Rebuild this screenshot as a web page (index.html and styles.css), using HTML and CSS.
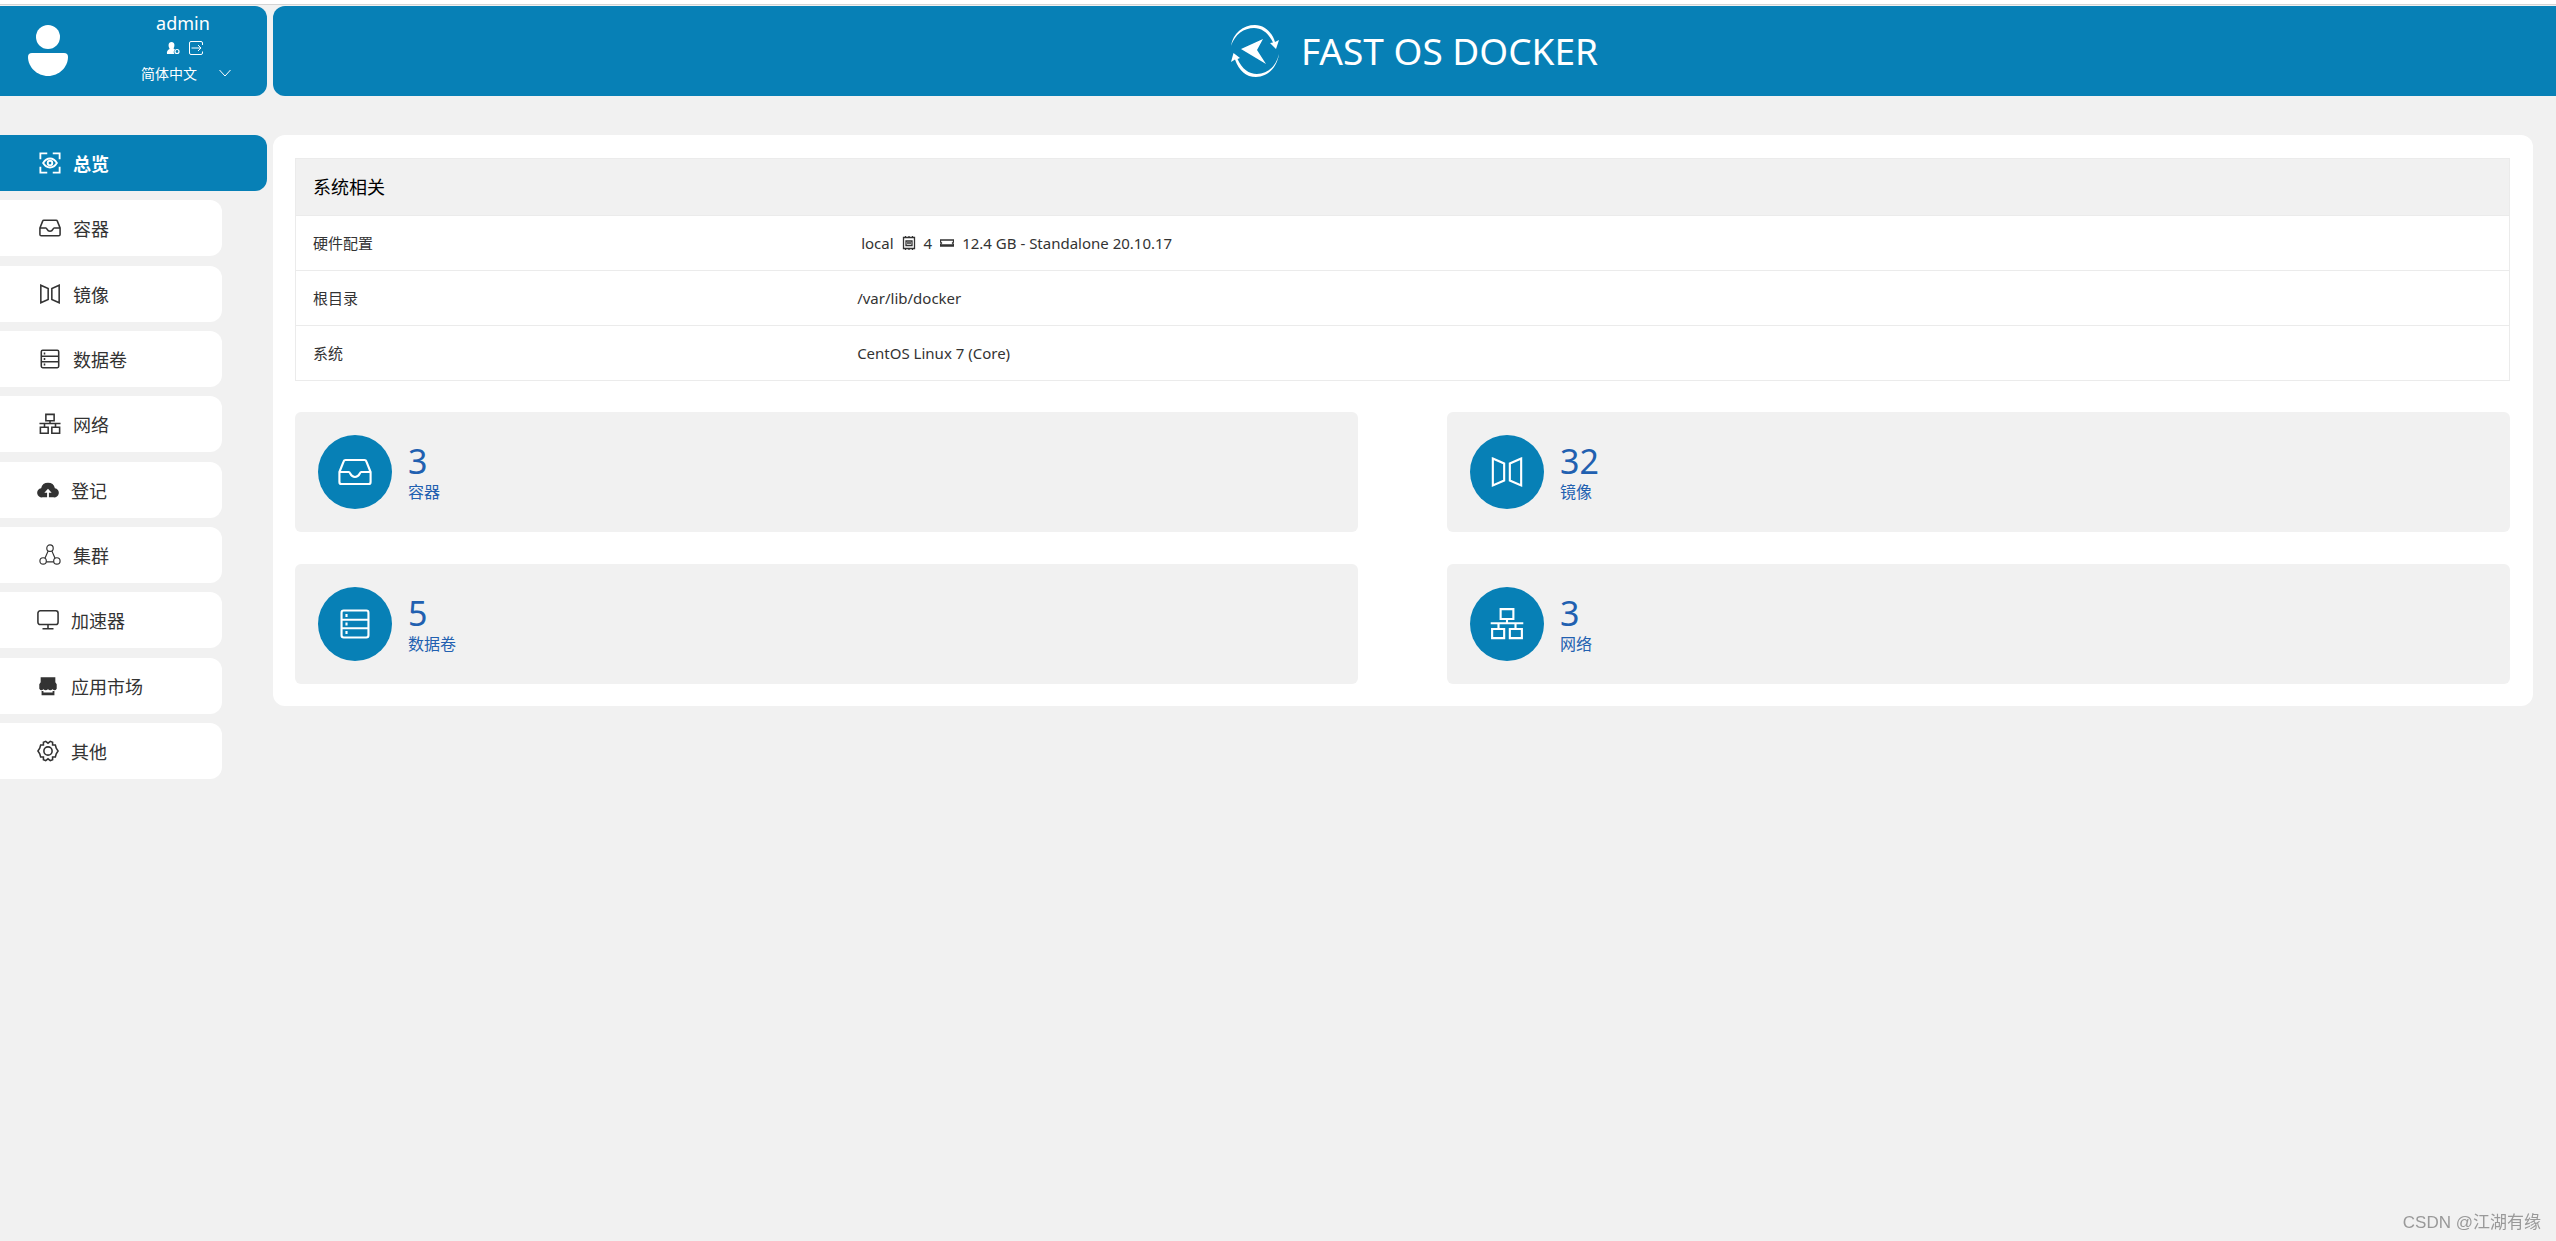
FILE: index.html
```html
<!DOCTYPE html>
<html lang="zh-CN">
<head>
<meta charset="utf-8">
<meta name="viewport" content="width=device-width, initial-scale=1">
<title>FAST OS DOCKER</title>
<link rel="stylesheet" href="styles.css">
</head>
<body>
<svg class="sprite" aria-hidden="true">
  <symbol id="i-view" viewBox="0 0 24 24"><path d="M1.500 8V1.500H9M15 1.500h7.500V8M22.500 16v6.500H15M9 22.500H1.500V16" /><path d="M4.500 12c4-6.500 11-6.500 15 0-4 6.500-11 6.500-15 0z"/><circle cx="12" cy="12" r="2.500"/></symbol>
  <symbol id="i-box" viewBox="0 0 24 24"><path d="M1 12 4 4.500Q4.300 3.500 5.300 3.500H18.700Q19.700 3.500 20 4.500L23 12V19Q23 20.500 21.500 20.500H2.500Q1 20.500 1 19zM1 12H7.500C9 12 8.500 15.500 12 15.500S15 12 16.500 12H23"/></symbol>
  <symbol id="i-mirror" viewBox="0 0 24 24"><path d="M2 2.500 10 6V18L2 21.500zM22 2.500 14 6V18L22 21.500z"/></symbol>
  <symbol id="i-disk" viewBox="0 0 24 24"><rect x="2.500" y="2.500" width="19" height="19" rx="1.500"/><path d="M2.500 9H21.500M2.500 15H21.500M6 5v2M6 11v2M6 17v2"/></symbol>
  <symbol id="i-net" viewBox="0 0 24 24"><path d="M7.500 1.500h9v7h-9zM1.500 15.500h8.500v6.500H1.500zM14 15.500h8.500v6.500H14zM12 8.500v3M.5 11.500h23M6 11.500v4M18 11.500v4"/></symbol>
  <symbol id="i-cloud" viewBox="0 0 24 24"><path d="M6 20A5 5 0 0 1 4.500 10 7.700 7.700 0 0 1 19.500 10 5 5 0 0 1 18 20H13V15H16L12 10.500 8 15H11V20z" fill="currentColor" stroke="none"/></symbol>
  <symbol id="i-cluster" viewBox="0 0 24 24"><circle cx="12" cy="4.500" r="3.500"/><circle cx="4.500" cy="18.500" r="3.500"/><circle cx="19.500" cy="18.500" r="3.500"/><path d="M10 7.500 6.500 15.500M14 7.500 17.500 15.500M8 19.500H16"/></symbol>
  <symbol id="i-screen" viewBox="0 0 24 24"><rect x="1" y="2" width="22" height="15" rx="2.500"/><path d="M12 17v4M6 21.500h12"/></symbol>
  <symbol id="i-shop" viewBox="0 0 24 24"><path d="M4 2.500H20V8L21.500 10V15Q19.500 18 17 15.500 14.500 18 12 15.500 9.500 18 7 15.500 4.500 18 2.500 15V10L4 8zM5 17.500H7V19H17V17.500H19V22H5z" fill="currentColor" stroke="none"/></symbol>
  <symbol id="i-gear" viewBox="0 0 24 24"><path d="M9.500 1.500 12 3.500 14.500 1.500 17 2.500V5.500H20L21 9 23 12 21 15 20 18.500H17V21.500L14.500 22.500 12 20.500 9.500 22.500 7 21.500V18.500H4L3 15 1 12 3 9 4 5.500H7V2.500z"/><circle cx="12" cy="12" r="4.500"/></symbol>
</svg>

<header class="top">
  <section class="user">
    <svg class="avatar" viewBox="0 0 40 52" aria-hidden="true"><circle cx="20" cy="12" r="12"/><path d="M4 28H36Q40 28 40 32C40 42 31 51 20 51S0 42 0 32Q0 28 4 28z"/></svg>
    <div class="user-info">
      <span class="user-name">admin</span>
      <div class="user-actions">
        <button type="button" aria-label="个人设置"><svg viewBox="0 0 14 14" aria-hidden="true"><path d="M5.500 1C9 1 9 5 7.500 7.500L9 8.500A3 3 0 0 0 8.500 13H1C.5 10.500 1.500 9 3.700 8 2 5 2 1 5.500 1z" fill="currentColor"/><circle cx="11" cy="10.500" r="2" fill="none" stroke="currentColor" stroke-width="1.200"/></svg></button>
        <button type="button" aria-label="退出"><svg viewBox="0 0 14 14" aria-hidden="true"><path d="M13.500 4V2Q13.500.5 12 .5H2Q.5.500.5 2V12Q.5 13.500 2 13.500H12Q13.500 13.500 13.500 12V10.500M2.500 7H12M9 4 12 7 9 10" fill="none" stroke="currentColor"/></svg></button>
      </div>
      <label class="lang">
        <select aria-label="语言"><option>简体中文</option></select>
        <svg viewBox="0 0 12 8" aria-hidden="true"><path d="M.5 1 6 7 11.500 1" fill="none" stroke="currentColor"/></svg>
      </label>
    </div>
  </section>
  <div class="brand">
    <svg class="logo" viewBox="0 0 48 52" aria-hidden="true"><path d="M0 21C2 8 12 0 24 0 33 0 41 7 44 17L48 15 45 24 39 18 42 17.500C37 7 30 3 23 3 13 3 4 9 0 21zM48 29C46 43 36 52 25 52 15 52 8 46 4 34.500L0 37 2.500 28 9 33 6.500 34C11 44 18 49 26 49 36 49 45 42 48 29zM10 24 32 14 26 25 35 39z"/></svg>
    <h1>FAST OS DOCKER</h1>
  </div>
</header>

<div class="layout">
  <nav class="menu">
    <a class="active" href="#overview"><svg aria-hidden="true"><use href="#i-view"/></svg><span>总览</span></a>
    <a href="#containers"><svg aria-hidden="true"><use href="#i-box"/></svg><span>容器</span></a>
    <a href="#images"><svg aria-hidden="true"><use href="#i-mirror"/></svg><span>镜像</span></a>
    <a href="#volumes"><svg aria-hidden="true"><use href="#i-disk"/></svg><span>数据卷</span></a>
    <a href="#networks"><svg aria-hidden="true"><use href="#i-net"/></svg><span>网络</span></a>
    <a class="compact" href="#registry"><svg aria-hidden="true"><use href="#i-cloud"/></svg><span>登记</span></a>
    <a href="#swarm"><svg class="fine" aria-hidden="true"><use href="#i-cluster"/></svg><span>集群</span></a>
    <a class="compact" href="#mirror"><svg aria-hidden="true"><use href="#i-screen"/></svg><span>加速器</span></a>
    <a class="compact" href="#market"><svg aria-hidden="true"><use href="#i-shop"/></svg><span>应用市场</span></a>
    <a class="compact" href="#other"><svg aria-hidden="true"><use href="#i-gear"/></svg><span>其他</span></a>
  </nav>

  <main class="panel">
    <table class="system">
      <colgroup><col class="name"><col></colgroup>
      <thead><tr><th colspan="2">系统相关</th></tr></thead>
      <tbody>
        <tr><th scope="row">硬件配置</th><td>
          <div class="hardware"><span>local</span>
          <svg viewBox="0 0 14 14" aria-hidden="true"><path d="M1.500 1.500h11v11h-11zM4 5h6v4.500H4zM5 7h4M3.500 0v1.500M7 0v1.500M10.500 0v1.500M3.500 12.500V14M7 12.500V14M10.500 12.500V14"/></svg>
          <span>4</span>
          <svg viewBox="0 0 14 14" aria-hidden="true"><path d="M.5 4h13v2l-1 1 1 1v2H.5V8l1-1-1-1zM1 9h12"/></svg>
          <span>12.4 GB - Standalone 20.10.17</span></div></td></tr>
        <tr><th scope="row">根目录</th><td>/var/lib/docker</td></tr>
        <tr><th scope="row">系统</th><td>CentOS Linux 7 (Core)</td></tr>
      </tbody>
    </table>
    <div class="cards">
      <a class="card" href="#containers"><span class="disc"><svg aria-hidden="true"><use href="#i-box"/></svg></span><span class="figures"><b>3</b><span>容器</span></span></a>
      <a class="card" href="#images"><span class="disc"><svg aria-hidden="true"><use href="#i-mirror"/></svg></span><span class="figures"><b>32</b><span>镜像</span></span></a>
      <a class="card" href="#volumes"><span class="disc"><svg aria-hidden="true"><use href="#i-disk"/></svg></span><span class="figures"><b>5</b><span>数据卷</span></span></a>
      <a class="card" href="#networks"><span class="disc"><svg aria-hidden="true"><use href="#i-net"/></svg></span><span class="figures"><b>3</b><span>网络</span></span></a>
    </div>
  </main>
</div>
<div class="credit">CSDN @江湖有缘</div>
</body>
</html>
```
FILE: styles.css
```css
* { box-sizing: border-box; }

body {
  margin: 0;
  border-top: 4px solid #fff;
  background: #f1f1f1;
  color: #333;
  font-family: "Noto Sans", "Noto Sans CJK SC", sans-serif;
  font-size: 15px;
  line-height: 22px;
}

a { color: inherit; text-decoration: none; }
.sprite { display: none; }

/* header */
.top {
  display: flex;
  gap: 6px;
  padding-top: 1px;
  border-top: 1px solid #d4d4d4;
  color: #fff;
}
.user {
  flex: none;
  display: flex;
  align-items: center;
  gap: 64px;
  width: 267px;
  height: 90px;
  padding-left: 28px;
  border-radius: 0 12px 12px 0;
  background: #0780b6;
}
.avatar { width: 40px; height: 52px; fill: #fff; }
.user-info {
  display: flex;
  flex-direction: column;
  align-items: center;
  gap: 6px;
  width: 102px;
}
.user-name { font-size: 18px; line-height: 24px; }
.user-actions { display: flex; gap: 9px; padding-left: 2px; }
.user-actions button {
  display: block;
  width: 14px;
  height: 14px;
  padding: 0;
  border: 0;
  background: none;
  color: #fff;
}
.user-actions svg { display: block; width: 14px; height: 14px; }
.lang { display: flex; align-items: center; gap: 22px; padding-left: 6px; }
.lang select {
  appearance: none;
  padding: 0;
  border: 0;
  background: none;
  color: #fff;
  font: 400 14px/24px "Noto Sans CJK SC", sans-serif;
}
.lang svg { width: 12px; height: 8px; }
.user-info { padding-bottom: 6px; }
.brand {
  flex: 1;
  display: flex;
  align-items: center;
  justify-content: center;
  gap: 22px;
  border-radius: 12px 0 0 12px;
  background: #0780b6;
}
.logo { width: 48px; height: 52px; fill: #fff; }
.brand h1 {
  margin: 0;
  font-size: 37px;
  line-height: 48px;
  font-weight: 400;
}

/* page body */
.layout {
  display: flex;
  align-items: flex-start;
  gap: 6px;
  padding: 39px 23px 39px 0;
}
.menu {
  flex: none;
  display: flex;
  flex-direction: column;
  justify-content: space-between;
  width: 267px;
  min-height: 644px;
}
.menu a {
  display: flex;
  align-items: center;
  gap: 12px;
  width: 222px;
  height: 56px;
  padding-left: 39px;
  border-radius: 0 12px 12px 0;
  background: #fff;
  font-size: 18px;
}
.menu span { padding-top: 2px; }
.menu svg {
  width: 22px;
  height: 22px;
  fill: none;
  stroke: currentColor;
  stroke-width: 1.700;
}
.menu svg.fine { stroke-width: 1.300; }
.menu .compact { padding-left: 37px; }
.menu .active {
  width: 267px;
  background: #0780b6;
  color: #fff;
  font-weight: 700;
}
.menu .active svg { stroke-width: 2; }

.panel {
  flex: 1;
  padding: 23px 23px 22px 22px;
  border-radius: 12px;
  background: #fff;
}
.system {
  width: 100%;
  border-collapse: collapse;
  table-layout: fixed;
}
.system .name { width: 24.6%; }
.system tr { border: 1px solid #ebebeb; }
.system th, .system td {
  height: 55px;
  padding: 0 17px;
  text-align: left;
  font-weight: 400;
}
.system thead th {
  height: 57px;
  background: #f1f1f1;
  color: #000;
  font-size: 18px;
}
.hardware { display: flex; align-items: center; gap: 8px; padding-left: 4px; }
.hardware svg { width: 14px; height: 14px; fill: none; stroke: currentColor; stroke-width: 1.300; }

.cards {
  display: grid;
  grid-template-columns: 1fr 1fr;
  gap: 32px 89px;
  margin-top: 31px;
}
.card {
  display: flex;
  align-items: center;
  gap: 16px;
  height: 120px;
  padding: 0 23px;
  border-radius: 6px;
  background: #f1f1f1;
  color: #2160b0;
}
.disc {
  display: flex;
  align-items: center;
  justify-content: center;
  width: 74px;
  height: 74px;
  border-radius: 50%;
  background: #0780b6;
  color: #fff;
}
.disc svg {
  width: 34px;
  height: 34px;
  fill: none;
  stroke: currentColor;
  stroke-width: 1.500;
}
.figures { display: flex; flex-direction: column; font-size: 16px; }
.figures b { font-size: 34px; line-height: 40px; font-weight: 400; }

.credit {
  position: fixed;
  right: 15px;
  bottom: 5px;
  color: #999;
  font: 400 17px/26px "Liberation Sans", "Noto Sans CJK SC", sans-serif;
}
```
